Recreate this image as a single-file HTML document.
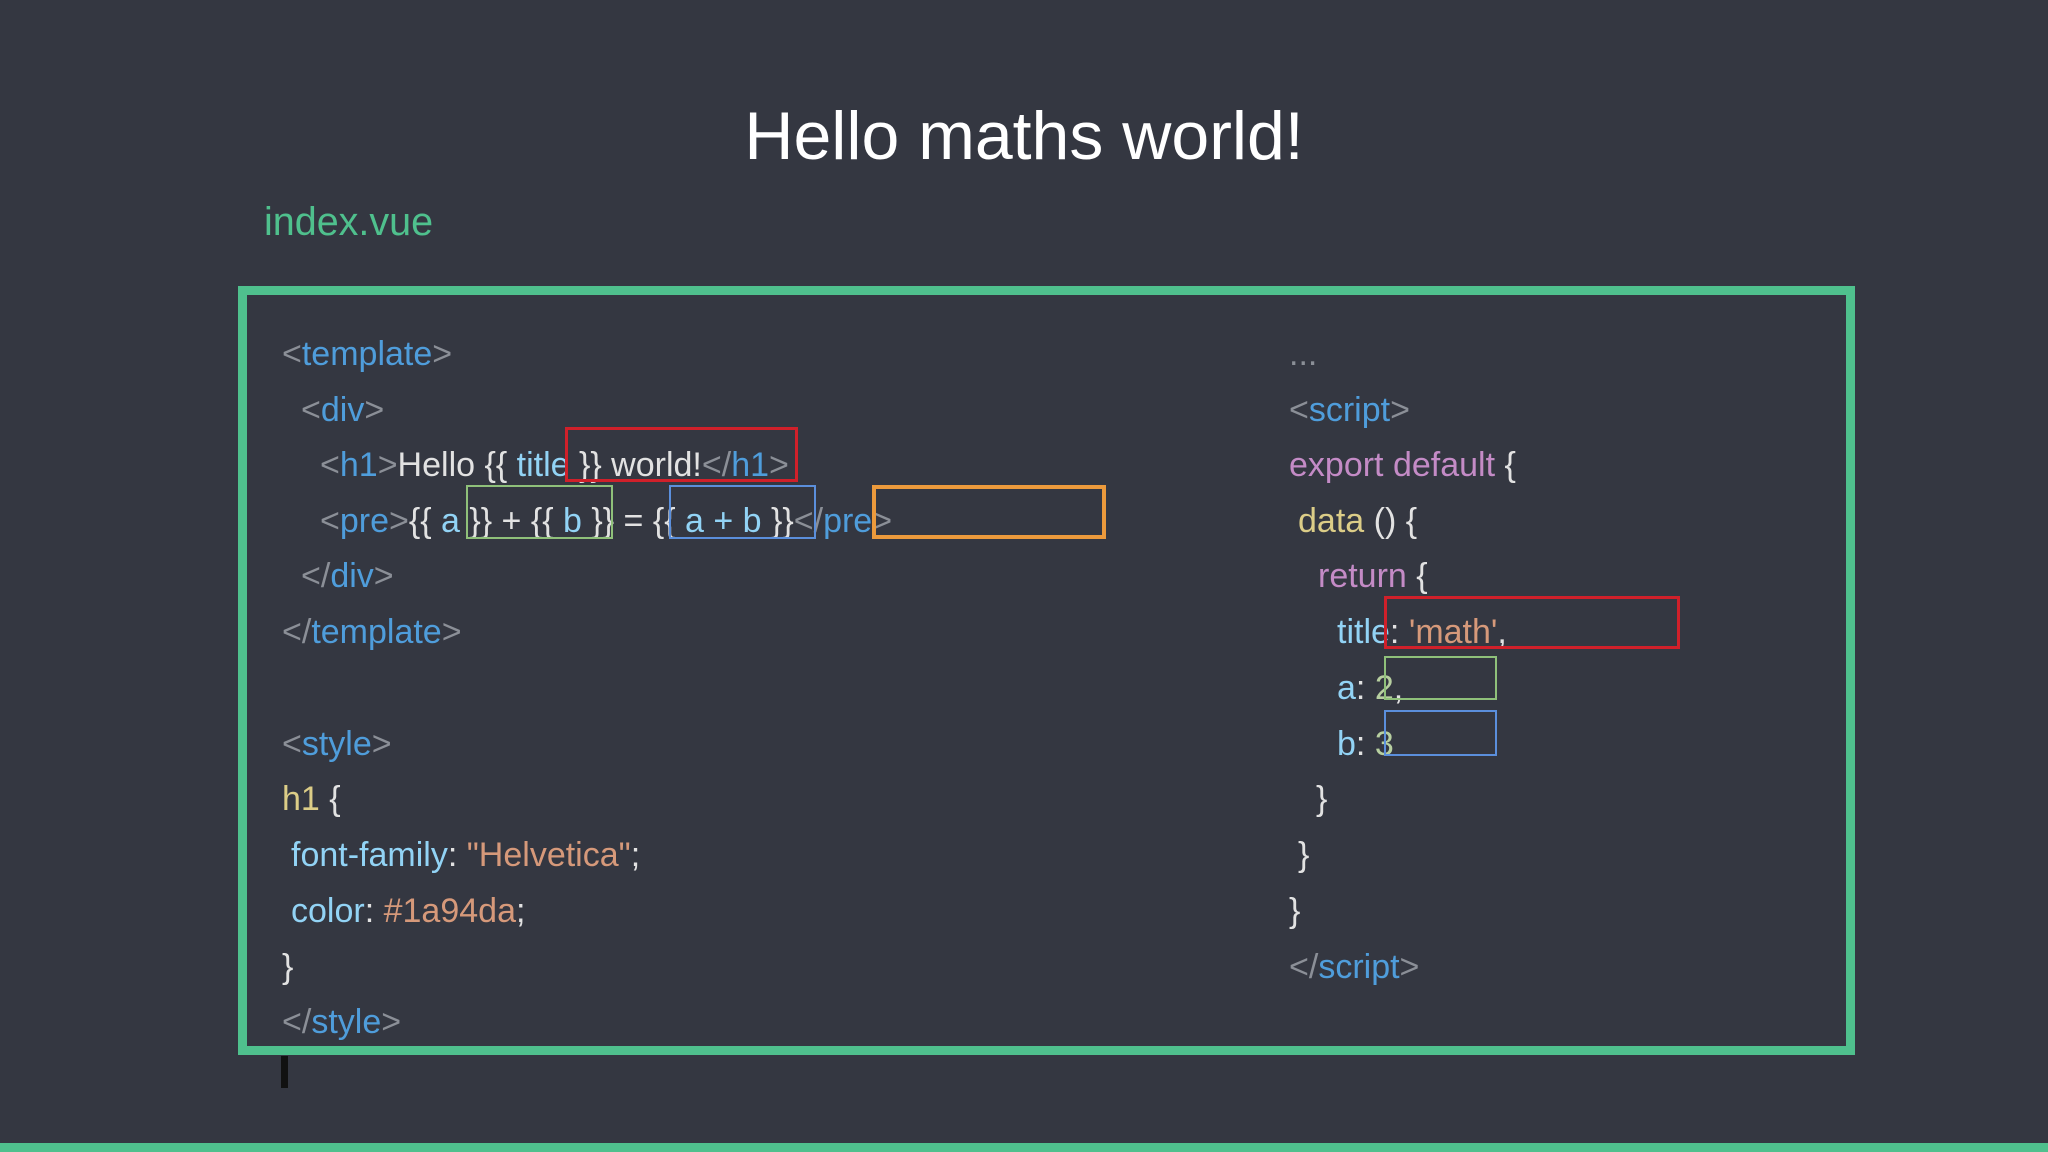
<!DOCTYPE html>
<html><head><meta charset="utf-8"><style>
body{margin:0;width:2048px;height:1152px;background:#343741;position:relative;overflow:hidden;font-family:"Liberation Sans",sans-serif;}
.t{position:absolute;left:0;width:2048px;top:96px;text-align:center;}
.t span{display:inline-block;font-size:68px;color:#fff;line-height:80px}
.iv{position:absolute;left:264px;top:198px;font-size:39.5px;color:#4fc08d;line-height:48px}
.frame{position:absolute;left:238px;top:286px;width:1599px;height:751px;border:9px solid #4fc08d;}
.bar{position:absolute;left:0;top:1143px;width:2048px;height:9px;background:#4fc08d}
.l{position:absolute;font-size:34px;line-height:56px;height:56px;white-space:pre;color:#e2e2e2}
.g{color:#8b8f97}.b{color:#4f9ddb}.a{color:#92d3f5}.s{color:#d6997a}.p{color:#c48bc6}.y{color:#dccd87}.n{color:#b7cfa0}
.bx{position:absolute;box-sizing:border-box;border:2px solid}
</style></head><body>
<div class="t"><span>Hello maths world!</span></div>
<div class="iv">index.vue</div>
<div class="frame"></div>
<div class="bar"></div>

<div class="l" style="left:282px;top:326px"><span class="g">&lt;</span><span class="b">template</span><span class="g">&gt;</span></div>
<div class="l" style="left:301px;top:382px"><span class="g">&lt;</span><span class="b">div</span><span class="g">&gt;</span></div>
<div class="l" style="left:320px;top:437px"><span class="g">&lt;</span><span class="b">h1</span><span class="g">&gt;</span>Hello {{ <span class="a">title</span> }} world!<span class="g">&lt;/</span><span class="b">h1</span><span class="g">&gt;</span></div>
<div class="l" style="left:320px;top:493px"><span class="g">&lt;</span><span class="b">pre</span><span class="g">&gt;</span>{{ <span class="a">a</span> }} + {{ <span class="a">b</span> }} = {{ <span class="a">a + b</span> }}<span class="g">&lt;/</span><span class="b">pre</span><span class="g">&gt;</span></div>
<div class="l" style="left:301px;top:548px"><span class="g">&lt;/</span><span class="b">div</span><span class="g">&gt;</span></div>
<div class="l" style="left:282px;top:604px"><span class="g">&lt;/</span><span class="b">template</span><span class="g">&gt;</span></div>
<div class="l" style="left:282px;top:716px"><span class="g">&lt;</span><span class="b">style</span><span class="g">&gt;</span></div>
<div class="l" style="left:282px;top:771px"><span class="y">h1</span> {</div>
<div class="l" style="left:291px;top:827px"><span class="a">font-family</span>: <span class="s">"Helvetica"</span>;</div>
<div class="l" style="left:291px;top:883px"><span class="a">color</span>: <span class="s">#1a94da</span>;</div>
<div class="l" style="left:282px;top:939px">}</div>
<div class="l" style="left:282px;top:994px"><span class="g">&lt;/</span><span class="b">style</span><span class="g">&gt;</span></div>

<div class="l g" style="left:1289px;top:326px">...</div>
<div class="l" style="left:1289px;top:382px"><span class="g">&lt;</span><span class="b">script</span><span class="g">&gt;</span></div>
<div class="l" style="left:1289px;top:437px"><span class="p">export default</span> {</div>
<div class="l" style="left:1298px;top:493px"><span class="y">data</span> () {</div>
<div class="l" style="left:1318px;top:548px"><span class="p">return</span> {</div>
<div class="l" style="left:1337px;top:604px"><span class="a">title</span>: <span class="s">'math'</span>,</div>
<div class="l" style="left:1337px;top:660px"><span class="a">a</span>: <span class="n">2</span>,</div>
<div class="l" style="left:1337px;top:716px"><span class="a">b</span>: <span class="n">3</span></div>
<div class="l" style="left:1316px;top:771px">}</div>
<div class="l" style="left:1298px;top:827px">}</div>
<div class="l" style="left:1289px;top:883px">}</div>
<div class="l" style="left:1289px;top:939px"><span class="g">&lt;/</span><span class="b">script</span><span class="g">&gt;</span></div>

<div class="bx" style="left:565px;top:427px;width:233px;height:55px;border-color:#d0202a;border-width:3px"></div>
<div class="bx" style="left:466px;top:485px;width:147px;height:54px;border-color:#8fc07a"></div>
<div class="bx" style="left:669px;top:485px;width:147px;height:54px;border-color:#5b8fdc"></div>
<div class="bx" style="left:872px;top:485px;width:234px;height:54px;border-color:#ec9a3c;border-width:4px"></div>
<div class="bx" style="left:1384px;top:596px;width:296px;height:53px;border-color:#d0202a;border-width:3px"></div>
<div class="bx" style="left:1384px;top:656px;width:113px;height:44px;border-color:#8fc07a"></div>
<div class="bx" style="left:1384px;top:710px;width:113px;height:46px;border-color:#5b8fdc"></div>
<div style="position:absolute;left:281px;top:1056px;width:7px;height:32px;background:#111"></div>
</body></html>
